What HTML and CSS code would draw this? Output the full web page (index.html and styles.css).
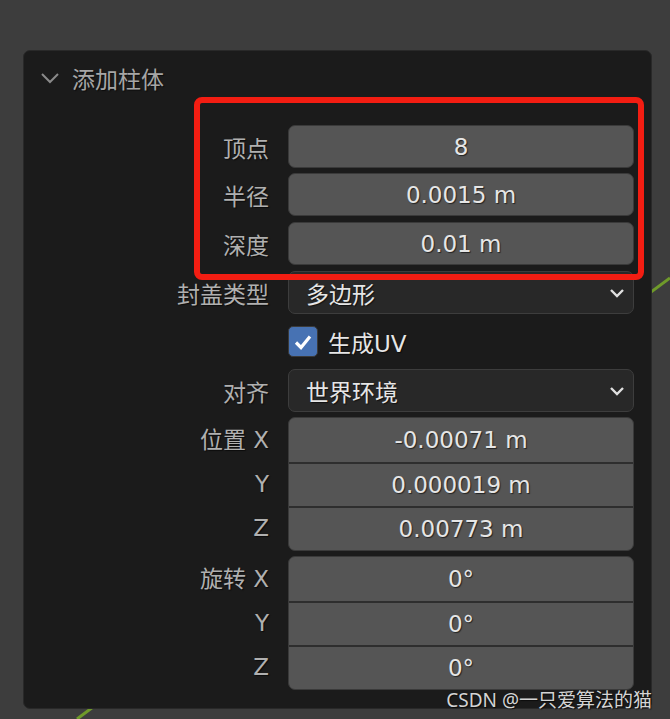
FILE: index.html
```html
<!DOCTYPE html>
<html>
  <head>
    <link rel="stylesheet" href="styles.css">
  </head>
  <body>
    <svg class="viewport-line" width="670" height="719">
      <line x1="77" y1="719" x2="670" y2="278" stroke="#6f9a2a" stroke-width="3" />
    </svg>

    <div class="panel">
      <div class="panel-header">
        <svg class="header-chevron" width="20" height="12" viewBox="0 0 20 12">
          <polyline points="2,2 10,10 18,2" fill="none" stroke="#8a8a8a" stroke-width="2" />
        </svg>
        <span class="panel-title">添加柱体</span>
      </div>

      <div class="rows">
        <div class="row">
          <div class="label">顶点</div>
          <div class="field number">8</div>
        </div>
        <div class="row">
          <div class="label">半径</div>
          <div class="field number">0.0015 m</div>
        </div>
        <div class="row">
          <div class="label">深度</div>
          <div class="field number">0.01 m</div>
        </div>
        <div class="row">
          <div class="label">封盖类型</div>
          <div class="field select">
            <span>多边形</span>
            <svg class="select-chevron" width="16" height="10" viewBox="0 0 16 10">
              <polyline points="2,2 8,8 14,2" fill="none" stroke="#e0e0e0" stroke-width="2.4" />
            </svg>
          </div>
        </div>
        <div class="row">
          <div class="label"></div>
          <div class="check-line">
            <div class="checkbox">
              <svg width="22" height="22" viewBox="0 0 22 22">
                <polyline points="4,11.5 9,16.5 18,5.5" fill="none" stroke="#ffffff" stroke-width="3.2" />
              </svg>
            </div>
            <span class="check-text">生成UV</span>
          </div>
        </div>
        <div class="row">
          <div class="label">对齐</div>
          <div class="field select">
            <span>世界环境</span>
            <svg class="select-chevron" width="16" height="10" viewBox="0 0 16 10">
              <polyline points="2,2 8,8 14,2" fill="none" stroke="#e0e0e0" stroke-width="2.4" />
            </svg>
          </div>
        </div>

        <div class="group-row">
          <div class="group-labels">
            <div class="label">位置 X</div>
            <div class="label">Y</div>
            <div class="label">Z</div>
          </div>
          <div class="group">
            <div class="cell">-0.00071 m</div>
            <div class="cell">0.000019 m</div>
            <div class="cell">0.00773 m</div>
          </div>
        </div>

        <div class="group-row">
          <div class="group-labels">
            <div class="label">旋转 X</div>
            <div class="label">Y</div>
            <div class="label">Z</div>
          </div>
          <div class="group">
            <div class="cell">0°</div>
            <div class="cell">0°</div>
            <div class="cell">0°</div>
          </div>
        </div>
      </div>
    </div>

    <!-- red annotation box drawn on top of the screenshot -->
    <div class="highlight"></div>

    <div class="watermark">CSDN @一只爱算法的猫</div>
  </body>
</html>
```

FILE: styles.css
```css
body {
  margin: 0;
  width: 670px;
  height: 719px;
  overflow: hidden;
  position: relative;
  background-color: #3d3d3d;
  font-family: "DejaVu Sans", "Noto Sans CJK SC", sans-serif;
  font-size: 23px;
}

.viewport-line {
  position: absolute;
  left: 0;
  top: 0;
}

.panel {
  position: relative;
  margin: 50px 0 0 23px;
  width: 629px;
  height: 659px;
  box-sizing: border-box;
  background-color: #1b1b1b;
  border: 1px solid #292929;
  border-radius: 7px;
}

.panel-header {
  display: flex;
  align-items: center;
  height: 54px;
  padding-left: 16px;
}

.header-chevron {
  margin-right: 12px;
}

.panel-title {
  color: #a6a6a6;
  font-size: 23px;
  text-shadow: 1px 1px 1px rgba(0, 0, 0, 0.6);
}

.rows {
  display: flex;
  flex-direction: column;
  gap: 6px;
  padding-top: 20px;
}

.row {
  display: flex;
  align-items: center;
  height: 43px;
}

.row:nth-child(2) {
  margin-top: -1px;
}

.label {
  width: 245px;
  text-align: right;
  color: #b0b0b0;
  text-shadow: 1px 1px 1px rgba(0, 0, 0, 0.6);
}

.field {
  margin-left: 19px;
  width: 346px;
  height: 43px;
  box-sizing: border-box;
  border-radius: 7px;
  color: #e6e6e6;
  display: flex;
  align-items: center;
  text-shadow: 1px 1px 1px rgba(0, 0, 0, 0.6);
}

.number {
  background-color: #555555;
  border: 1px solid #3a3a3a;
  justify-content: center;
}

.select {
  background-color: #282828;
  border: 1px solid #3d3d3d;
  justify-content: space-between;
  padding: 0 8px 0 17px;
}

.check-line {
  margin-left: 19px;
  display: flex;
  align-items: center;
}

.checkbox {
  width: 30px;
  height: 31px;
  box-sizing: border-box;
  background-color: #4772b3;
  border: 1px solid #3a3a3a;
  border-radius: 5px;
  display: flex;
  align-items: center;
  justify-content: center;
}

.check-text {
  margin-left: 10px;
  color: #e6e6e6;
  text-shadow: 1px 1px 1px rgba(0, 0, 0, 0.6);
}

.group-row {
  display: flex;
  margin-top: -1px;
}

.group-labels {
  display: flex;
  flex-direction: column;
  padding-top: 1px;
}

.group-labels .label {
  height: 44px;
  line-height: 44px;
}

.group {
  margin-left: 19px;
  width: 346px;
  box-sizing: border-box;
  background-color: #555555;
  border: 1px solid #3a3a3a;
  border-radius: 7px;
  overflow: hidden;
}

.cell {
  height: 44px;
  box-sizing: border-box;
  display: flex;
  align-items: center;
  justify-content: center;
  color: #e6e6e6;
  text-shadow: 1px 1px 1px rgba(0, 0, 0, 0.6);
}

.cell + .cell {
  border-top: 2px solid #2e2e2e;
}

.highlight {
  position: absolute;
  left: 194px;
  top: 97px;
  width: 450px;
  height: 183px;
  box-sizing: border-box;
  border: 6px solid #f31d12;
  border-radius: 8px;
}

.watermark {
  position: absolute;
  right: 18px;
  bottom: 8px;
  font-family: "Noto Sans", "Noto Sans CJK SC", sans-serif;
  font-size: 19px;
  line-height: 22px;
  color: #d4d4d4;
  text-shadow: 1px 1px 1px rgba(0, 0, 0, 0.6);
}
```
